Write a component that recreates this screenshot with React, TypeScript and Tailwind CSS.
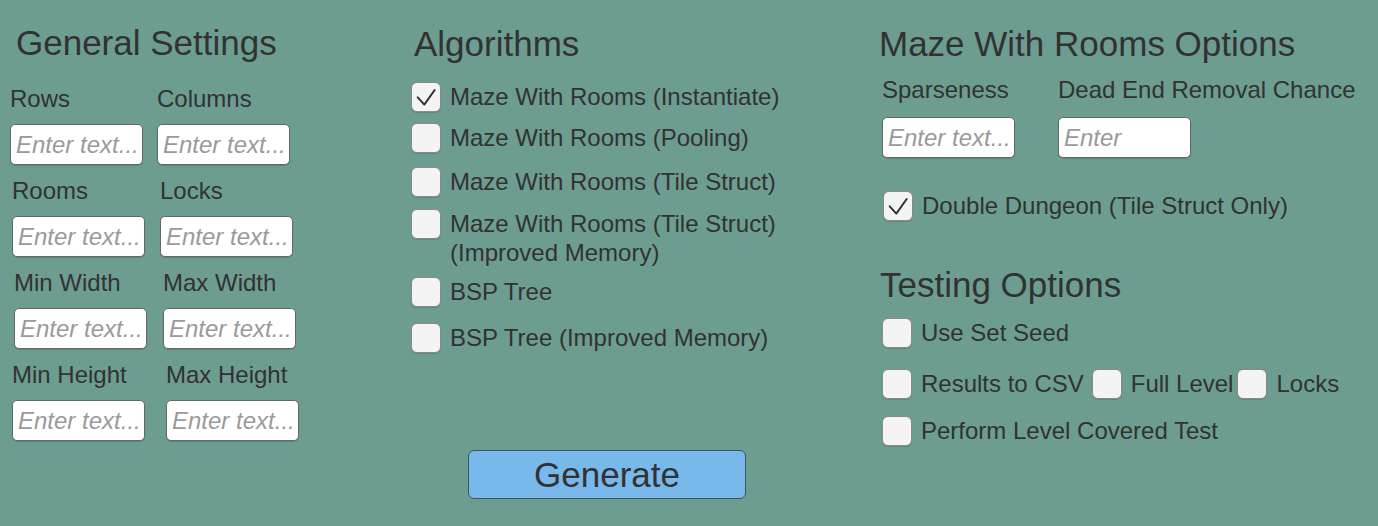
import React from "react";

const Check = () => (
  <svg width="30" height="30" viewBox="0 0 30 30" className="absolute left-[-1px] top-[-1px]">
    <path d="M6.7 15.3 L13.3 22.6 L23.7 8" fill="none" stroke="#333" strokeWidth="2" strokeLinecap="round" strokeLinejoin="round" />
  </svg>
);

function Box({ checked = false }: { checked?: boolean }) {
  return (
    <div className="relative w-[30px] h-[30px] shrink-0 rounded-[6px] border border-[#8a8a8a] bg-[#f4f4f4] shadow-[0_1px_1px_rgba(0,0,0,0.15)]">
      {checked && <Check />}
    </div>
  );
}

function Field({ placeholder = "Enter text..." }: { placeholder?: string }) {
  return (
    <input
      placeholder={placeholder}
      className="w-[133px] h-[41px] rounded-[5px] border border-[#666] bg-white pl-[5px] text-[24px] text-[#323232] outline-none placeholder:italic placeholder:text-[#9a9a9a] shadow-[0_1px_1px_rgba(0,0,0,0.15)]"
    />
  );
}

const generalRows = [
  { labels: ["Rows", "Columns"], cls: "flex pl-[10px] gap-[14px] mb-[14px]" },
  { labels: ["Rooms", "Locks"], cls: "flex pl-[12px] gap-[15px] mb-[14px]" },
  { labels: ["Min Width", "Max Width"], cls: "flex pl-[14px] gap-[16px] mb-[14px]" },
  { labels: ["Min Height", "Max Height"], cls: "flex pl-[12px] gap-[21px]" },
];

const algos: { text: React.ReactNode; checked?: boolean; cls: string }[] = [
  { text: "Maze With Rooms (Instantiate)", checked: true, cls: "mb-[11px]" },
  { text: "Maze With Rooms (Pooling)", cls: "mb-[14px]" },
  { text: "Maze With Rooms (Tile Struct)", cls: "mb-[12px]" },
  {
    text: (
      <>
        Maze With Rooms (Tile Struct)
        <br />
        (Improved Memory)
      </>
    ),
    cls: "mb-[10px]",
  },
  { text: "BSP Tree", cls: "mb-[16px]" },
  { text: "BSP Tree (Improved Memory)", cls: "" },
];

export default function App() {
  return (
    <div className="w-[1378px] h-[526px] overflow-hidden bg-[#6d9d91] text-[#323232] font-['Liberation_Sans',Arial,sans-serif] flex">
      {/* General Settings */}
      <div className="w-[400px] shrink-0 flex flex-col">
        <div className="mt-[25px] pl-[16px] text-[35px] leading-[35px]">General Settings</div>
        <div className="mt-[27px] flex flex-col">
          {generalRows.map((r) => (
            <div key={r.labels[0]} className={r.cls}>
              {r.labels.map((l) => (
                <div key={l} className="flex flex-col w-[133px]">
                  <div className="text-[24px] leading-[24px] whitespace-nowrap">{l}</div>
                  <div className="mt-[13px]">
                    <Field />
                  </div>
                </div>
              ))}
            </div>
          ))}
        </div>
      </div>

      {/* Algorithms */}
      <div className="w-[470px] shrink-0 flex flex-col">
        <div className="mt-[26px] pl-[14px] text-[35px] leading-[35px]">Algorithms</div>
        <div className="mt-[21px] pl-[11px] flex flex-col">
          {algos.map((a, i) => (
            <div key={i} className={"flex items-start gap-[9px] " + a.cls}>
              <Box checked={a.checked} />
              <div className="text-[24px] leading-[29px] whitespace-nowrap">{a.text}</div>
            </div>
          ))}
        </div>
        <button className="mt-[97px] ml-[68px] w-[278px] h-[49px] rounded-[6px] border border-[#3c5566] bg-[#79b8ea] flex items-center justify-center text-[35px] leading-[35px] text-[#323232]">
          Generate
        </button>
      </div>

      {/* Maze With Rooms Options + Testing */}
      <div className="flex-1 flex flex-col">
        <div className="mt-[26px] pl-[9px] text-[35px] leading-[35px] whitespace-nowrap">Maze With Rooms Options</div>
        <div className="mt-[17px] pl-[12px] flex gap-[43px]">
          <div className="flex flex-col w-[133px]">
            <div className="text-[24px] leading-[24px] whitespace-nowrap">Sparseness</div>
            <div className="mt-[15px]">
              <Field />
            </div>
          </div>
          <div className="flex flex-col w-[133px]">
            <div className="text-[24px] leading-[24px] whitespace-nowrap">Dead End Removal Chance</div>
            <div className="mt-[15px]">
              <Field placeholder="Enter" />
            </div>
          </div>
        </div>
        <div className="mt-[33px] pl-[13px] flex items-start gap-[9px]">
          <Box checked />
          <div className="text-[24px] leading-[29px] whitespace-nowrap">Double Dungeon (Tile Struct Only)</div>
        </div>

        <div className="mt-[46px] pl-[10px] text-[35px] leading-[35px]">Testing Options</div>
        <div className="mt-[16px] pl-[12px] flex flex-col">
          <div className="flex items-start gap-[9px] mb-[21px]">
            <Box />
            <div className="text-[24px] leading-[29px] whitespace-nowrap">Use Set Seed</div>
          </div>
          <div className="flex items-start mb-[17px]">
            <Box />
            <div className="ml-[9px] text-[24px] leading-[29px] whitespace-nowrap">Results to CSV</div>
            <div className="ml-[8px]">
              <Box />
            </div>
            <div className="ml-[9px] text-[24px] leading-[29px] whitespace-nowrap">Full Level</div>
            <div className="ml-[4px]">
              <Box />
            </div>
            <div className="ml-[9px] text-[24px] leading-[29px] whitespace-nowrap">Locks</div>
          </div>
          <div className="flex items-start gap-[9px]">
            <Box />
            <div className="text-[24px] leading-[29px] whitespace-nowrap">Perform Level Covered Test</div>
          </div>
        </div>
      </div>
    </div>
  );
}
